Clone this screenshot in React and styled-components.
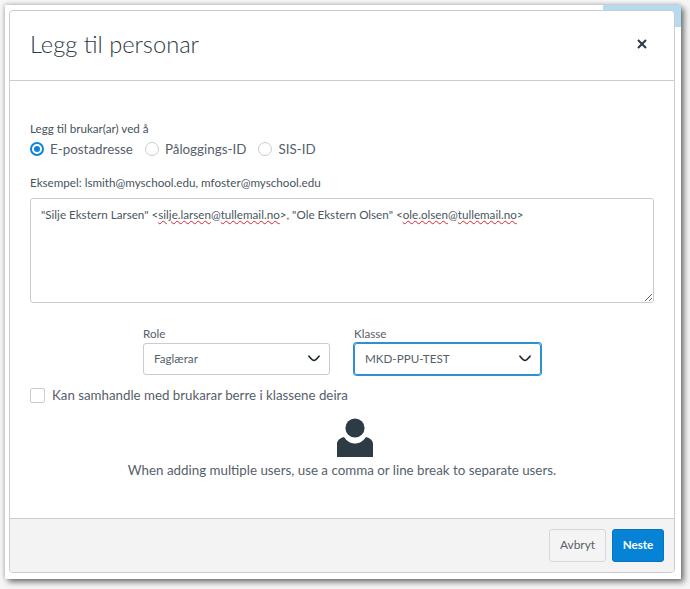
import React from 'react';
import styled, { createGlobalStyle } from 'styled-components';

const Global = createGlobalStyle`
  html, body { margin: 0; padding: 0; background: #f6f6f6; }
  * { box-sizing: border-box; }
  body { font-family: Lato, "Open Sans", sans-serif; color: #2d3b45; }
`;

const Page = styled.div`
  width: 690px;
  height: 589px;
  padding: 5px 9px 10px 5px;
`;

const Frame = styled.div`
  width: 676px;
  height: 574px;
  padding: 5px 6px 6px 4px;
  background: linear-gradient(#b6daef, #b6daef) right top / 78px 22px no-repeat, #fff;
  box-shadow: 3px 3px 6px rgba(0, 0, 0, 0.55), -1px -1px 4px rgba(0, 0, 0, 0.18);
`;

const Dialog = styled.div`
  height: 100%;
  display: flex;
  flex-direction: column;
  background: #fff;
  border: 1px solid #c7cdd1;
  border-radius: 4px;
  overflow: hidden;
`;

const Header = styled.header`
  flex: none;
  height: 70px;
  display: flex;
  align-items: center;
  justify-content: space-between;
  padding: 0 27px 4px 20px;
  border-bottom: 1px solid #c7cdd1;
`;

const Title = styled.h1`
  margin: 0;
  font-size: 23.7px;
  font-weight: 300;
  color: #2d3b45;
`;

const Close = styled.button`
  display: flex;
  padding: 0;
  border: 0;
  background: none;
`;

const Body = styled.main`
  flex: 1;
  padding: 40px 20px 0;
`;

const SmallLabel = styled.div`
  font-size: 11.65px;
  line-height: 15px;
  color: #47535b;
`;

const RadioRow = styled.div`
  display: flex;
  align-items: center;
  margin-top: 4px;
  height: 17px;
`;

const RadioItem = styled.label`
  display: flex;
  align-items: center;
  gap: 6px;
  margin-right: 12px;
  font-size: 13.4px;
  color: #56616a;
`;

const RadioMark = styled.span`
  width: 14px;
  height: 14px;
  border-radius: 50%;
  display: flex;
  align-items: center;
  justify-content: center;
  background: #fff;
  border: ${(p) => (p.$on ? '2px solid #0b84dc' : '1px solid #c7cdd1')};
  &::after {
    content: '';
    width: 6px;
    height: 6px;
    border-radius: 50%;
    background: ${(p) => (p.$on ? '#0b84dc' : 'transparent')};
  }
`;

const Example = styled(SmallLabel)`
  margin-top: 18px;
`;

const Editor = styled.div`
  margin-top: 8px;
  width: 624px;
  height: 105px;
  padding: 8px 10px;
  border: 1px solid #c7cdd1;
  border-radius: 3px;
  font-size: 11.65px;
  line-height: 16px;
  color: #4b565e;
  resize: both;
  overflow: auto;
`;

const Misspelt = styled.span`
  text-decoration: underline wavy #d8262e 1px;
  text-underline-offset: 1px;
`;

const SelectRow = styled.div`
  display: flex;
  gap: 24px;
  margin-top: 23px;
  padding-left: 113px;
`;

const Field = styled.div`
  width: 187px;
`;

const FieldLabel = styled.div`
  font-size: 11.65px;
  line-height: 15px;
  color: #56616a;
`;

const SelectBox = styled.div`
  margin-top: 2px;
  height: 32px;
  padding: 0 9px 2px 10px;
  display: flex;
  align-items: center;
  justify-content: space-between;
  border: 1px solid ${(p) => (p.$focus ? '#2f8fd3' : '#c7cdd1')};
  box-shadow: ${(p) => (p.$focus ? '0 0 0 1px #2f8fd3' : 'none')};
  border-radius: 3px;
  font-size: 11.65px;
  color: #56616a;
`;

const CheckRow = styled.label`
  margin-top: 12px;
  display: flex;
  align-items: center;
  gap: 7px;
  font-size: 13.3px;
  color: #56616a;
`;

const CheckBox = styled.span`
  width: 15px;
  height: 15px;
  border: 1px solid #c7cdd1;
  border-radius: 2px;
  background: #fff;
`;

const Hint = styled.div`
  margin-top: 15px;
  display: flex;
  flex-direction: column;
  align-items: center;
  font-size: 13.35px;
  color: #56616a;
`;

const HintIcon = styled.svg`
  display: block;
  margin-left: 26px;
  margin-bottom: 5px;
`;

const Footer = styled.footer`
  flex: none;
  height: 54px;
  padding: 10px 10px 0 0;
  display: flex;
  justify-content: flex-end;
  gap: 6px;
  background: #f3f3f3;
  border-top: 1px solid #c7cdd1;
`;

const Button = styled.button`
  height: 33px;
  width: ${(p) => (p.$primary ? '52px' : '57px')};
  padding: 0 0 2px;
  font-family: inherit;
  font-size: ${(p) => (p.$primary ? '11.65px' : '11.9px')};
  font-weight: ${(p) => (p.$primary ? 700 : 400)};
  color: ${(p) => (p.$primary ? '#fff' : '#56616a')};
  background: ${(p) => (p.$primary ? '#0683d6' : '#f4f4f4')};
  border: 1px solid ${(p) => (p.$primary ? '#0374bd' : '#d5d8da')};
  border-radius: 3px;
`;

const Chevron = () => (
  <svg width="12" height="7" viewBox="0 0 12 7" fill="none">
    <path d="M1 1.2 C3 3.6 4.6 5.4 6 5.4 C7.4 5.4 9 3.6 11 1.2" stroke="#1f2a32" strokeWidth="1.7" strokeLinecap="round" />
  </svg>
);

export default function App() {
  return (
    <>
      <Global />
      <Page>
        <Frame>
          <Dialog>
            <Header>
              <Title>Legg til personar</Title>
              <Close aria-label="Lukk">
                <svg width="10" height="10" viewBox="0 0 10 10">
                  <path d="M1 1 L9 9 M9 1 L1 9" stroke="#2d3b45" strokeWidth="2.1" />
                </svg>
              </Close>
            </Header>
            <Body>
              <SmallLabel>Legg til brukar(ar) ved å</SmallLabel>
              <RadioRow>
                <RadioItem><RadioMark $on />E-postadresse</RadioItem>
                <RadioItem><RadioMark />Påloggings-ID</RadioItem>
                <RadioItem><RadioMark />SIS-ID</RadioItem>
              </RadioRow>
              <Example>Eksempel: lsmith@myschool.edu, mfoster@myschool.edu</Example>
              <Editor>
                "Silje Ekstern Larsen" &lt;<Misspelt>silje.larsen</Misspelt>@<Misspelt>tullemail.no</Misspelt>&gt;, "Ole Ekstern Olsen" &lt;<Misspelt>ole.olsen</Misspelt>@<Misspelt>tullemail.no</Misspelt>&gt;
              </Editor>
              <SelectRow>
                <Field>
                  <FieldLabel>Role</FieldLabel>
                  <SelectBox>Faglærar<Chevron /></SelectBox>
                </Field>
                <Field>
                  <FieldLabel>Klasse</FieldLabel>
                  <SelectBox $focus>MKD-PPU-TEST<Chevron /></SelectBox>
                </Field>
              </SelectRow>
              <CheckRow><CheckBox />Kan samhandle med brukarar berre i klassene deira</CheckRow>
              <Hint>
                <HintIcon width="38" height="39" viewBox="0 0 38 39">
                  <circle cx="19" cy="10" r="9.6" fill="#2d3b45" />
                  <path d="M1 39 V26 C1 22.5 4 20 8 19 C11 23.5 15 25.5 19 25.5 C23 25.5 27 23.5 30 19 C34 20 37 22.5 37 26 V39 Z" fill="#2d3b45" />
                </HintIcon>
                When adding multiple users, use a comma or line break to separate users.
              </Hint>
            </Body>
            <Footer>
              <Button>Avbryt</Button>
              <Button $primary>Neste</Button>
            </Footer>
          </Dialog>
        </Frame>
      </Page>
    </>
  );
}
